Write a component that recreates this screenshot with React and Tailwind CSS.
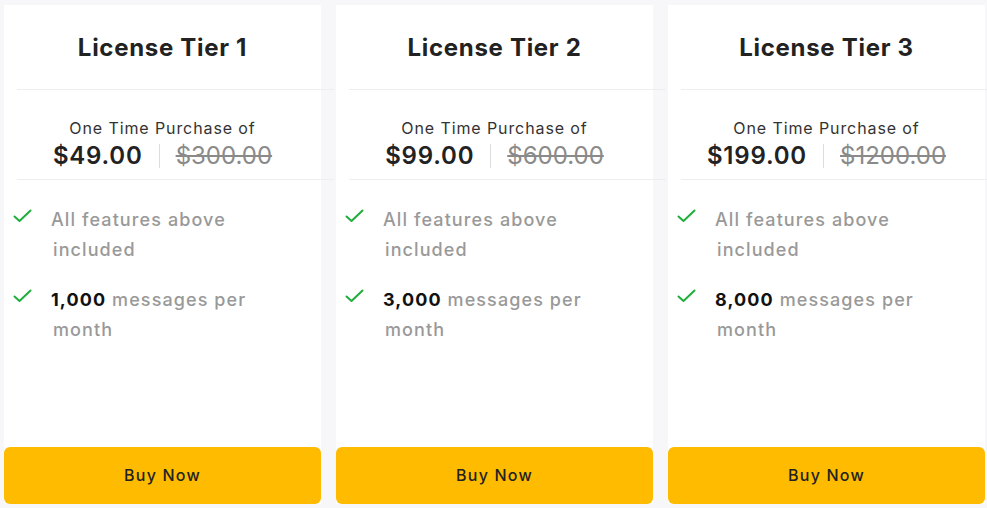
import React from "react";

const tiers = [
  { title: "License Tier 1", price: "$49.00", old: "$300.00", msgs: "1,000" },
  { title: "License Tier 2", price: "$99.00", old: "$600.00", msgs: "3,000" },
  { title: "License Tier 3", price: "$199.00", old: "$1200.00", msgs: "8,000" },
];

function Check() {
  return (
    <svg width="19" height="14" viewBox="0 0 19 14" fill="none" className="shrink-0 mt-[2px]">
      <path d="M1.5 7.5 L6.5 12 L17.5 1.5" stroke="#1fae3c" strokeWidth="2" strokeLinecap="round" strokeLinejoin="round" />
    </svg>
  );
}

function Card({ t }) {
  return (
    <div className="w-[317px] h-[499px] bg-white flex flex-col shrink-0">
      <div className="h-[84px] flex items-center justify-center pt-[2px]">
        <h2 className="text-[24px] font-bold text-[#222] tracking-[0.7px]">{t.title}</h2>
      </div>
      <div className="ml-[13px] w-full h-px bg-[#eeeeee] shrink-0" />
      <div className="flex flex-col items-center pt-[28px] pb-[8px]">
        <div className="text-[16px] leading-[20px] text-[#333] tracking-[0.9px]">One Time Purchase of</div>
        <div className="flex items-center leading-[30px] text-[24px] mt-[3px]">
          <span className="font-semibold text-[#222] tracking-[0.8px]">{t.price}</span>
          <span className="mx-[16px] w-px h-[24px] bg-[#dddddd]" />
          <span className="text-[#8a8a8a] line-through decoration-[1.5px]">{t.old}</span>
        </div>
      </div>
      <div className="ml-[13px] w-full h-px bg-[#eeeeee] shrink-0" />
      <div className="flex flex-col gap-[22px] pt-[27px] pl-[9px] pr-[20px]">
        <div className="flex items-start gap-[19px]">
          <Check />
          <div className="text-[18px] leading-[30px] font-medium text-[#999] tracking-[1.1px] -mt-[2px] w-[220px]">
            All features above <span className="pl-[2px]">included</span>
          </div>
        </div>
        <div className="flex items-start gap-[19px]">
          <Check />
          <div className="text-[18px] leading-[30px] font-medium text-[#999] tracking-[1.1px] -mt-[2px] w-[220px]">
            <span className="font-bold text-[#111]">{t.msgs}</span> messages per <span className="pl-[2px]">month</span>
          </div>
        </div>
      </div>
      <button className="mt-auto h-[57px] w-full rounded-[6px] bg-[#ffbb00] text-[16px] font-medium text-[#222] tracking-[1.2px] pb-[1px]">
        Buy Now
      </button>
    </div>
  );
}

export default function App() {
  return (
    <div
      className="w-[987px] h-[508px] bg-[#f7f7f9] flex gap-[15px] pl-[4px] pt-[5px] overflow-hidden"
      style={{ fontFamily: "Inter, 'Noto Sans', sans-serif" }}
    >
      {tiers.map((t) => (
        <Card key={t.title} t={t} />
      ))}
    </div>
  );
}
